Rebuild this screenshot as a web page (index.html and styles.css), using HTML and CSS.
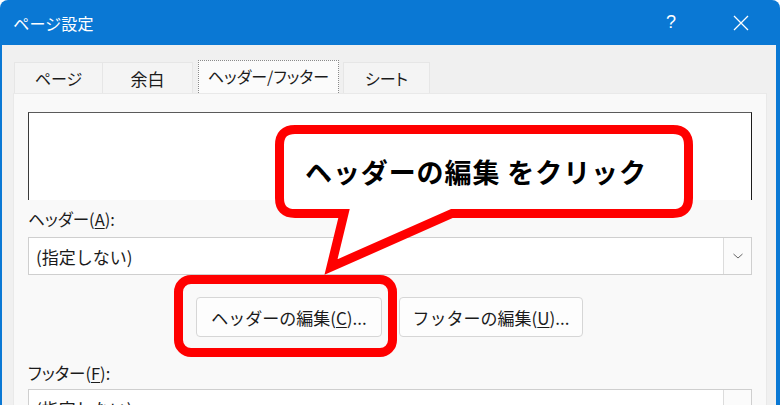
FILE: index.html
```html
<!DOCTYPE html>
<html lang="ja">
<head>
<meta charset="utf-8">
<title>ページ設定</title>
<link rel="stylesheet" href="styles.css">
</head>
<body>
<div class="window">
  <div class="titlebar">
    <span class="title">ページ設定</span>
    <span class="help">?</span>
    <svg class="close" width="16" height="16" viewBox="0 0 16 16"><path d="M1 1 L15 15 M15 1 L1 15" stroke="#fff" stroke-width="1.3" fill="none"/></svg>
  </div>
  <div class="client">
    <div class="tabs">
      <div class="tab tab-page">ページ</div>
      <div class="tab tab-margin">余白</div>
      <div class="tab tab-hf active">ヘッダー/フッター</div>
      <div class="tab tab-sheet">シート</div>
    </div>
    <div class="panel">
      <div class="preview"></div>
      <div class="label">ヘッダー(<u>A</u>):</div>
      <div class="combo">
        <span class="combo-text">(指定しない)</span>
        <span class="combo-btn"><svg width="12" height="8" viewBox="0 0 12 8"><path d="M1.5 2 L6 6 L10.5 2" stroke="#666" stroke-width="1" fill="none"/></svg></span>
      </div>
      <div class="buttons">
        <div class="btn btn-header">ヘッダーの編集(<u>C</u>)...</div>
        <div class="btn btn-footer">フッターの編集(<u>U</u>)...</div>
      </div>
      <div class="label label-footer">フッター(<u>F</u>):</div>
      <div class="combo">
        <span class="combo-text">(指定しない)</span>
        <span class="combo-btn"></span>
      </div>
    </div>
  </div>
  <div class="highlight"></div>
  <svg class="bubble" width="780" height="405" viewBox="0 0 780 405">
    <path d="M295 129.5 H673 Q688.5 129.5 688.5 145 V198 Q688.5 213.5 673 213.5 H452 L331 267 L344 213.5 H295 Q279.5 213.5 279.5 198 V145 Q279.5 129.5 295 129.5 Z" fill="#fff" stroke="#ff0000" stroke-width="9" stroke-linejoin="miter" stroke-miterlimit="10"/>
  </svg>
  <div class="bubble-text">ヘッダーの編集 をクリック</div>
</div>
</body>
</html>
```
FILE: styles.css
```css
* { box-sizing: border-box; }
html, body { margin: 0; padding: 0; background: #ffffff; }
body {
  font-family: "Noto Sans CJK JP", "Noto Sans", sans-serif;
  color: #1b1b1b;
}
.window {
  position: relative;
  width: 780px;
  height: 405px;
  background: #0a78d4;
  border-radius: 8px 8px 0 0;
  overflow: hidden;
}
.titlebar {
  height: 45px;
  display: flex;
  align-items: center;
  padding-left: 13px;
  color: #fff;
}
.title {
  font-size: 16px;
  font-feature-settings: "palt";
  letter-spacing: 0.3px;
  flex: 1;
}
.help {
  font-family: "Liberation Sans", sans-serif;
  font-size: 18px;
  margin-right: 57px;
}
.close { margin-right: 31px; }
.client {
  margin: 0 4px 0 2px;
  height: 360px;
  background: #f0f0f0;
  padding: 15px 9px 0 11px;
}
.tabs {
  display: flex;
  align-items: flex-end;
  height: 33px;
  padding-left: 1px;
}
.tab {
  height: 31px;
  display: flex;
  align-items: center;
  justify-content: center;
  font-size: 16px;
  font-feature-settings: "palt";
  background: #f4f4f4;
  border: 1px solid #e6e6e6;
  border-bottom: none;
  color: #1b1b1b;
}
.tab-page { width: 89px; }
.tab-margin { width: 90px; border-left: none; font-size: 17px; }
.tab-hf { width: 141px; margin-left: 5px; }
.tab-sheet { width: 87px; margin-left: 4px; }
.tab.active {
  height: 33px;
  background: #fbfbfb;
  border: 1px dotted #8a8a8a;
  border-bottom: none;
  padding-bottom: 2px;
}
.panel {
  background: #f9f9f9;
  border: 1px solid #e9e9e9;
  border-bottom: none;
  height: 312px;
  padding: 18px 14px 0 14px;
}
.preview {
  height: 88px;
  background: #fff;
  border: 1px solid #3a3a3a;
  border-top-color: #5a5a5a;
  border-right-color: #1c1c1c;
  border-bottom: none;
}
.label {
  margin-top: 8px;
  height: 22px;
  line-height: 22px;
  font-size: 16.5px;
  font-feature-settings: "palt";
  color: #1b1b1b;
}
.label u { text-underline-offset: 2px; }
.label-footer { margin-top: 25px; }
.combo {
  margin-top: 7px;
  height: 38px;
  background: #fff;
  border: 1px solid #cfcfcf;
  display: flex;
  align-items: center;
}
.label-footer + .combo { margin-top: 5px; }
.combo-text {
  flex: 1;
  padding-left: 7px;
  font-size: 17px;
  color: #1b1b1b;
}
.combo-btn {
  width: 28px;
  height: 100%;
  background: #fbfbfb;
  border-left: 1px solid #dcdcdc;
  display: flex;
  align-items: center;
  justify-content: center;
}
.buttons {
  margin-top: 22px;
  display: flex;
  justify-content: center;
  gap: 17px;
  padding-right: 1px;
}
.btn {
  height: 40px;
  background: #fdfdfd;
  border: 1px solid #d6d6d6;
  border-radius: 4px;
  display: flex;
  align-items: center;
  justify-content: center;
  font-size: 17px;
  color: #1b1b1b;
}
.btn u { text-underline-offset: 2px; }
.btn-header { width: 186px; }
.btn-footer { width: 184px; }
.highlight {
  position: absolute;
  left: 174px;
  top: 275px;
  width: 223px;
  height: 82px;
  border: 9px solid #ff0000;
  border-radius: 17px;
}
.bubble {
  position: absolute;
  left: 0;
  top: 0;
}
.bubble-text {
  position: absolute;
  left: 305px;
  top: 152px;
  font-size: 27px;
  line-height: 40px;
  font-weight: 700;
  color: #000;
  letter-spacing: 0.9px;
  white-space: pre;
}
```
